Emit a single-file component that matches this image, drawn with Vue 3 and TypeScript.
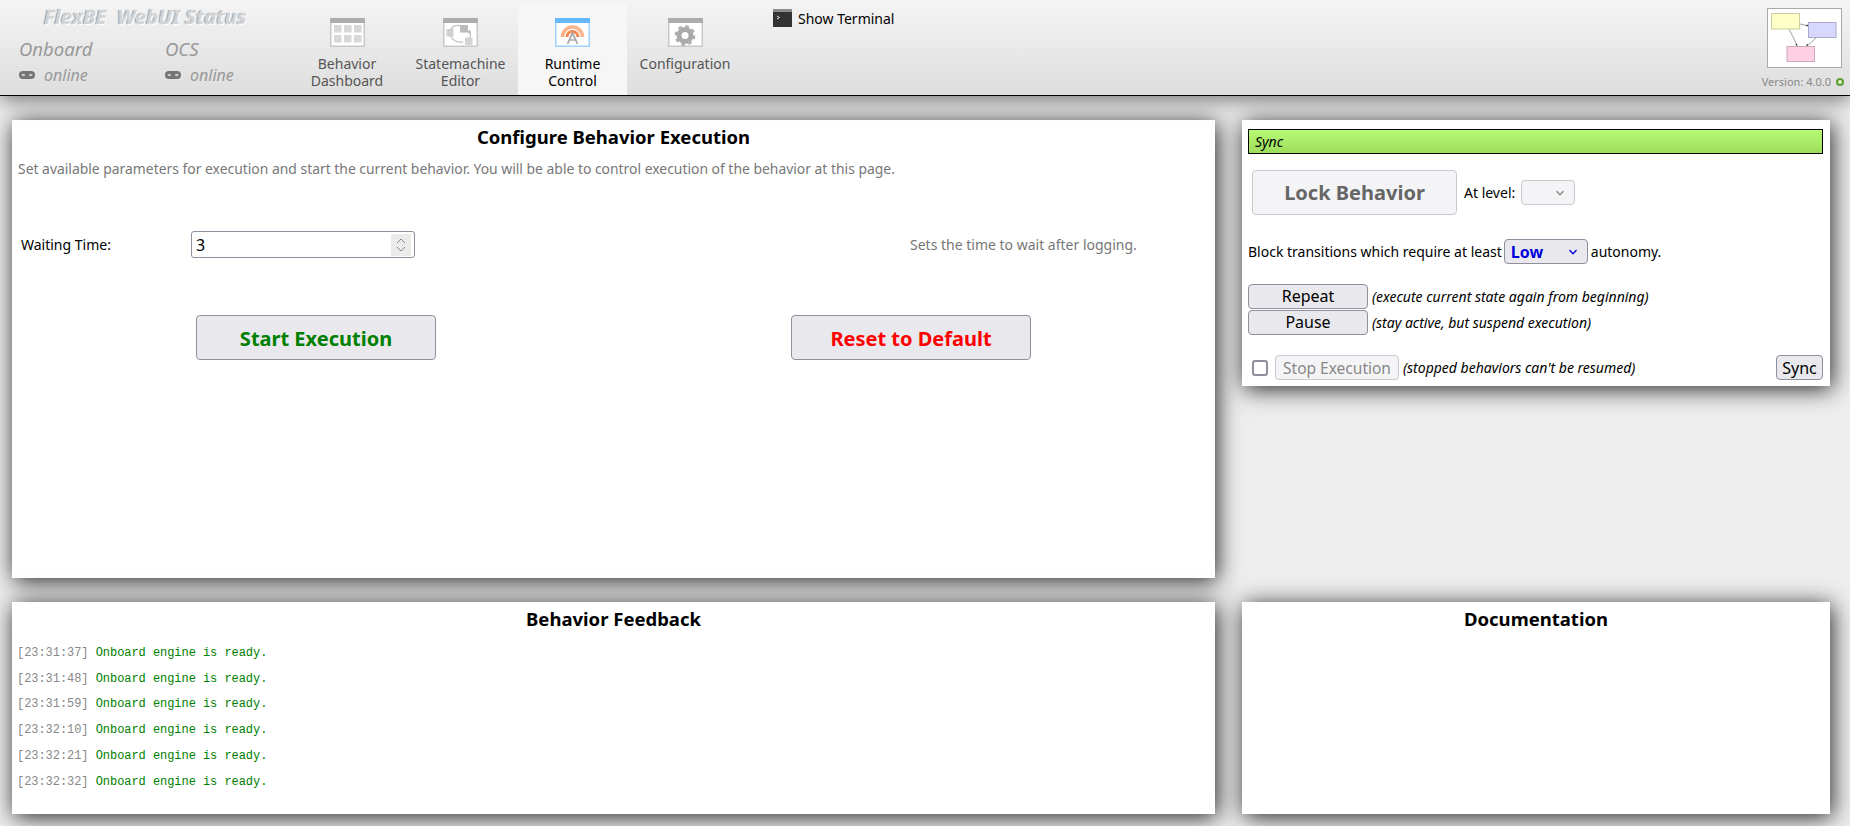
<template>
  <div class="page">
    <header class="topbar">
      <div class="status">
        <div class="status-title">FlexBE&nbsp; WebUI Status</div>
        <div class="status-cols">
          <div v-for="s in statusItems" :key="s" class="status-col">
            <div class="status-name">{{ s }}</div>
            <div class="status-state">
              <svg class="link-icon" width="16" height="8" viewBox="0 0 16 8">
                <rect width="16" height="8" rx="4" fill="#747474" />
                <rect x="2.500" y="2.700" width="3.500" height="2.600" rx="1.300" fill="#c4c4c4" />
                <rect x="10" y="2.700" width="3.500" height="2.600" rx="1.300" fill="#c4c4c4" />
              </svg>
              <span>online</span>
            </div>
          </div>
        </div>
      </div>

      <nav class="tabs">
        <div v-for="t in tabs" :key="t.id" :class="['tab', { active: t.id === 'runtime' }]" :style="{ width: t.width + 'px' }">
          <svg class="tab-icon" width="35" height="29" viewBox="0 0 35 29">
            <rect x="0.750" y="0.750" width="33.500" height="27.500" fill="#fff" :stroke="t.id === 'runtime' ? '#9fd2ff' : '#c8c8c8'" stroke-width="1.500" />
            <rect x="0" y="0" width="35" height="5" :fill="t.id === 'runtime' ? '#66b8ff' : '#acacac'" />
            <g v-if="t.id === 'dashboard'" fill="#d8d8d8">
              <rect v-for="c in gridCells" :key="c.x + '-' + c.y" :x="c.x" :y="c.y" width="7.500" height="7.500" />
            </g>
            <g v-if="t.id === 'editor'">
              <path d="M8 11C11 6 18 7 21 9M26 12C29 15 27 21 24 23M20 24C14 25 9 22 7 17" fill="none" stroke="#c4c4c4" stroke-width="1.300" />
              <rect x="3.500" y="11" width="7" height="7.500" fill="#d0d0d0" />
              <rect x="17" y="7" width="8" height="7.500" fill="#bcbcbc" />
              <rect x="22" y="19.500" width="7.500" height="7.500" fill="#d4d4d4" />
              <rect x="25" y="13" width="2.500" height="2.500" fill="#bbb" />
            </g>
            <g v-if="t.id === 'runtime'" fill="none">
              <path d="M7.500 19a10 10 0 0 1 20 0" stroke="#fbb48a" stroke-width="3.600" />
              <path d="M12 19a5.500 5.500 0 0 1 11 0" stroke="#f58a50" stroke-width="3" />
              <path d="M12.500 26l5-11 5 11" stroke="#a8a8a8" stroke-width="1.800" />
              <path d="M15 22h5" stroke="#a8a8a8" stroke-width="1.500" />
            </g>
            <g v-if="t.id === 'config'">
              <circle cx="17" cy="17.500" r="6" fill="none" stroke="#aaa" stroke-width="5" />
              <circle cx="17" cy="17.500" r="9.300" fill="none" stroke="#aaa" stroke-width="2" stroke-dasharray="3.700 3.600" />
            </g>
          </svg>
          <span class="tab-label">{{ t.line1 }}<br v-if="t.line2" />{{ t.line2 }}</span>
        </div>
      </nav>

      <div class="terminal">
        <svg width="19" height="18" viewBox="0 0 19 18">
          <rect width="19" height="18" fill="#333" />
          <rect width="19" height="3" fill="#8c8c8c" />
          <path d="M4 7l2.500 1.500L4 10" fill="none" stroke="#ddd" stroke-width="1" />
        </svg>
        <span>Show Terminal</span>
      </div>

      <div class="top-right">
        <svg class="logo" width="75" height="60" viewBox="0 0 75 60">
          <rect x="0.500" y="0.500" width="74" height="59" fill="#fff" stroke="#aaa" />
          <path d="M33 16l8 2M22 21l8 16M49 30l-9 8" stroke="#888" stroke-width="0.800" fill="none" />
          <path d="M42 18.300l-3-.2.600-1.800zM30.500 38.500l-2.200-2 1.700-.8zM39 38.500l1-2.800 1.300 1.300z" fill="#333" />
          <rect x="4.500" y="5.500" width="28" height="15.500" fill="#ffffc8" stroke="#cccca0" />
          <rect x="41.500" y="14.500" width="27.500" height="15" fill="#d8d8ff" stroke="#aaaacc" />
          <rect x="20" y="38.500" width="27.500" height="15" fill="#ffd0e4" stroke="#ccaabb" />
        </svg>
        <div class="version">
          <span>Version: 4.0.0</span>
          <span class="version-dot"></span>
        </div>
      </div>
    </header>

    <main class="content">
      <div class="grid">
        <section class="panel config-panel">
          <h2>Configure Behavior Execution</h2>
          <p class="config-hint">Set available parameters for execution and start the current behavior. You will be able to control execution of the behavior at this page.</p>
          <div class="param-row">
            <label class="param-label">Waiting Time:</label>
            <div class="number-field">
              <span>3</span>
              <div class="spin">
                <svg width="12" height="22" viewBox="0 0 12 22">
                  <path d="M2 9l4-4 4 4M2 13l4 4 4-4" fill="none" stroke="#888" stroke-width="1" />
                </svg>
              </div>
            </div>
            <span class="param-doc">Sets the time to wait after logging.</span>
          </div>
          <div class="config-actions">
            <button class="big-btn start">Start Execution</button>
            <button class="big-btn reset">Reset to Default</button>
          </div>
        </section>

        <section class="panel control-panel">
          <div class="sync-bar">Sync</div>
          <div class="lock-row">
            <button class="lock-btn">Lock Behavior</button>
            <span>At level:</span>
            <div class="select level-select">
              <svg width="10" height="6" viewBox="0 0 10 6"><path d="M1.500 1L5 4.800 8.500 1" fill="none" stroke="#888" stroke-width="1.300" /></svg>
            </div>
          </div>
          <div class="autonomy-row">
            <span>Block transitions which require at least</span>
            <div class="select autonomy-select">
              <b>Low</b>
              <svg width="10" height="6" viewBox="0 0 10 6"><path d="M1.500 1L5 4.800 8.500 1" fill="none" stroke="#0000dd" stroke-width="1.300" /></svg>
            </div>
            <span>autonomy.</span>
          </div>
          <div class="cmd-row">
            <button class="cmd-btn">Repeat</button>
            <i>(execute current state again from beginning)</i>
          </div>
          <div class="cmd-row">
            <button class="cmd-btn">Pause</button>
            <i>(stay active, but suspend execution)</i>
          </div>
          <div class="stop-row">
            <span class="check"></span>
            <button class="stop-btn">Stop Execution</button>
            <i>(stopped behaviors can't be resumed)</i>
            <button class="sync-btn">Sync</button>
          </div>
        </section>

        <section class="panel feedback-panel">
          <h2>Behavior Feedback</h2>
          <div class="log">
            <div v-for="time in logTimes" :key="time" class="log-line">
              <span class="log-time">[{{ time }}]</span> <span class="log-msg">Onboard engine is ready.</span>
            </div>
          </div>
        </section>

        <section class="panel doc-panel">
          <h2>Documentation</h2>
        </section>
      </div>
    </main>
  </div>
</template>

<script setup lang="ts">
const statusItems = ['Onboard', 'OCS']

const tabs = [
  { id: 'dashboard', line1: 'Behavior', line2: 'Dashboard', width: 112 },
  { id: 'editor', line1: 'Statemachine', line2: 'Editor', width: 115 },
  { id: 'runtime', line1: 'Runtime', line2: 'Control', width: 109 },
  { id: 'config', line1: 'Configuration', line2: '', width: 116 },
]

const gridCells: { x: number; y: number }[] = []
for (const y of [7, 17]) {
  for (const x of [4, 14, 24]) gridCells.push({ x, y })
}

const logTimes = ['23:31:37', '23:31:48', '23:31:59', '23:32:10', '23:32:21', '23:32:32']
</script>

<style>
html, body {
  margin: 0;
  background: #eee;
}
</style>

<style scoped>
.page {
  width: 1850px;
  height: 826px;
  overflow: hidden;
  background: #eee;
  font-family: "Noto Sans", sans-serif;
  font-size: 14px;
  color: #000;
}

.topbar {
  height: 95px;
  border-bottom: 1px solid #000;
  background: linear-gradient(#f4f4f4, #dedede);
  box-shadow: 0 4px 18px rgba(0, 0, 0, 0.5);
  display: flex;
  position: relative;
}

.status {
  width: 291px;
  flex: none;
  padding-left: 19px;
  box-sizing: border-box;
}
.status-title {
  font-style: italic;
  font-weight: bold;
  font-size: 20.300px;
  line-height: 22px;
  margin: 5px 0 0 25px;
  color: #d4d4d4;
  text-shadow: 1px 1px 1px #fff, -1px 0 1px #999;
  white-space: nowrap;
}
.status-cols {
  display: flex;
  margin-top: 9px;
}
.status-col {
  width: 146px;
  flex: none;
  color: #999;
  font-style: italic;
}
.status-name {
  font-size: 18.500px;
  line-height: 25px;
}
.status-state {
  display: flex;
  align-items: center;
  gap: 9px;
  font-size: 16px;
  line-height: 26px;
  margin-top: 1px;
}

.tabs {
  display: flex;
  padding-top: 4px;
  flex: none;
}
.tab {
  display: flex;
  flex-direction: column;
  align-items: center;
  color: #555;
  padding-top: 14px;
  box-sizing: border-box;
  text-align: center;
}
.tab.active {
  background: #f6f6f6;
  color: #000;
}
.tab-icon {
  flex: none;
}
.tab-label {
  font-size: 14px;
  line-height: 16.500px;
  margin-top: 9px;
}

.terminal {
  display: flex;
  align-items: flex-start;
  gap: 6px;
  margin-left: 30px;
  padding-top: 9px;
  font-size: 14px;
  line-height: 20px;
}

.top-right {
  margin-left: auto;
  padding: 8px 6px 0 0;
  display: flex;
  flex-direction: column;
  align-items: flex-end;
}
.logo {
  margin-right: 2px;
}
.version {
  display: flex;
  align-items: center;
  gap: 5px;
  font-size: 11px;
  line-height: 14px;
  color: #888;
  margin-top: 7px;
  white-space: nowrap;
}
.version-dot {
  width: 8px;
  height: 8px;
  border-radius: 50%;
  background: #dff0d0;
  border: 2px solid #5a9e2c;
  box-sizing: border-box;
}

.content {
  padding: 24px 20px 0 12px;
}
.grid {
  display: grid;
  grid-template-columns: 1203px 588px;
  grid-template-rows: 458px 212px;
  column-gap: 27px;
  row-gap: 24px;
}
.panel {
  background: #fff;
  box-shadow: 2px 3px 22px rgba(0, 0, 0, 0.85);
  box-sizing: border-box;
}
h2 {
  margin: 0;
  text-align: center;
  font-size: 18.500px;
  font-weight: bold;
  line-height: 28px;
  padding-top: 3px;
}

.config-hint {
  margin: 8px 0 0 6px;
  color: #777;
  font-size: 13.900px;
  line-height: 20px;
}
.param-row {
  display: flex;
  align-items: center;
  margin-top: 52px;
  padding-left: 9px;
}
.param-label {
  width: 170px;
  font-size: 14px;
}
.number-field {
  width: 224px;
  height: 27px;
  border: 1px solid #8f8f9d;
  border-radius: 3px;
  box-sizing: border-box;
  display: flex;
  align-items: center;
  justify-content: space-between;
  padding: 0 3px 0 4px;
  font-size: 16px;
}
.spin {
  width: 20px;
  height: 22px;
  background: #ebebeb;
  display: flex;
  justify-content: center;
}
.param-doc {
  margin-left: 495px;
  color: #777;
  font-size: 14px;
}
.config-actions {
  display: flex;
  margin-top: 57px;
  padding-left: 184px;
  gap: 355px;
}
.big-btn {
  width: 240px;
  height: 45px;
  background: #e9e9ed;
  border: 1px solid #8f8f9d;
  border-radius: 4px;
  font-family: inherit;
  font-size: 20px;
  font-weight: bold;
  padding: 2px 0 0;
}
.start { color: #008000; }
.reset { color: #f00; }

.control-panel {
  align-self: start;
  height: 266px;
  padding: 9px 7px 0 6px;
  font-size: 14px;
}
.sync-bar {
  height: 25px;
  border: 1px solid #000;
  box-sizing: border-box;
  background: linear-gradient(#b8fb74, #9ddc5c);
  font-style: italic;
  line-height: 23px;
  padding-left: 6px;
}
.lock-row {
  display: flex;
  align-items: center;
  margin-top: 16px;
  padding-left: 4px;
}
.lock-btn {
  width: 205px;
  height: 45px;
  background: #f4f4f6;
  border: 1px solid #c8c8d0;
  border-radius: 4px;
  font-family: inherit;
  font-size: 20px;
  font-weight: bold;
  color: #666;
  padding: 0;
  margin-right: 7px;
}
.select {
  height: 25px;
  border-radius: 4px;
  box-sizing: border-box;
  display: flex;
  align-items: center;
  justify-content: space-between;
}
.level-select {
  width: 54px;
  margin-left: 6px;
  background: #f4f4f6;
  border: 1px solid #c8c8d0;
  justify-content: flex-end;
  padding-right: 9px;
}
.autonomy-row {
  display: flex;
  align-items: center;
  margin-top: 24px;
  gap: 2px;
}
.autonomy-select {
  width: 84px;
  background: #e9e9ed;
  border: 1px solid #8f8f9d;
  padding: 0 9px 0 6px;
  margin-right: 1px;
  color: #0000dd;
  font-size: 16px;
}
.cmd-row {
  display: flex;
  align-items: center;
  gap: 4px;
  height: 26px;
}
.autonomy-row + .cmd-row {
  margin-top: 19px;
}
.cmd-btn {
  width: 120px;
  height: 25px;
  background: #e9e9ed;
  border: 1px solid #8f8f9d;
  border-radius: 4px;
  font-family: inherit;
  font-size: 16px;
  padding: 0;
}
.stop-row {
  display: flex;
  align-items: center;
  margin-top: 20px;
}
.check {
  width: 16px;
  height: 16px;
  margin: 0 7px 0 4px;
  border: 2px solid #8f8f9d;
  border-radius: 3px;
  box-sizing: border-box;
  flex: none;
}
.stop-btn {
  width: 124px;
  height: 25px;
  background: #f4f4f6;
  border: 1px solid #c8c8d0;
  border-radius: 4px;
  font-family: inherit;
  font-size: 15.500px;
  color: #888;
  padding: 0;
  margin-right: 4px;
  white-space: nowrap;
  flex: none;
}
.sync-btn {
  width: 47px;
  height: 25px;
  margin-left: auto;
  background: #e9e9ed;
  border: 1px solid #8f8f9d;
  border-radius: 4px;
  font-family: inherit;
  font-size: 16px;
  padding: 0;
  flex: none;
}

.log {
  margin-top: 8px;
  padding-left: 5px;
  font-family: "Liberation Mono", monospace;
  font-size: 12px;
  letter-spacing: -0.050px;
  line-height: 25.700px;
  white-space: pre;
}
.log-time { color: #888; }
.log-msg { color: #008000; }
</style>
